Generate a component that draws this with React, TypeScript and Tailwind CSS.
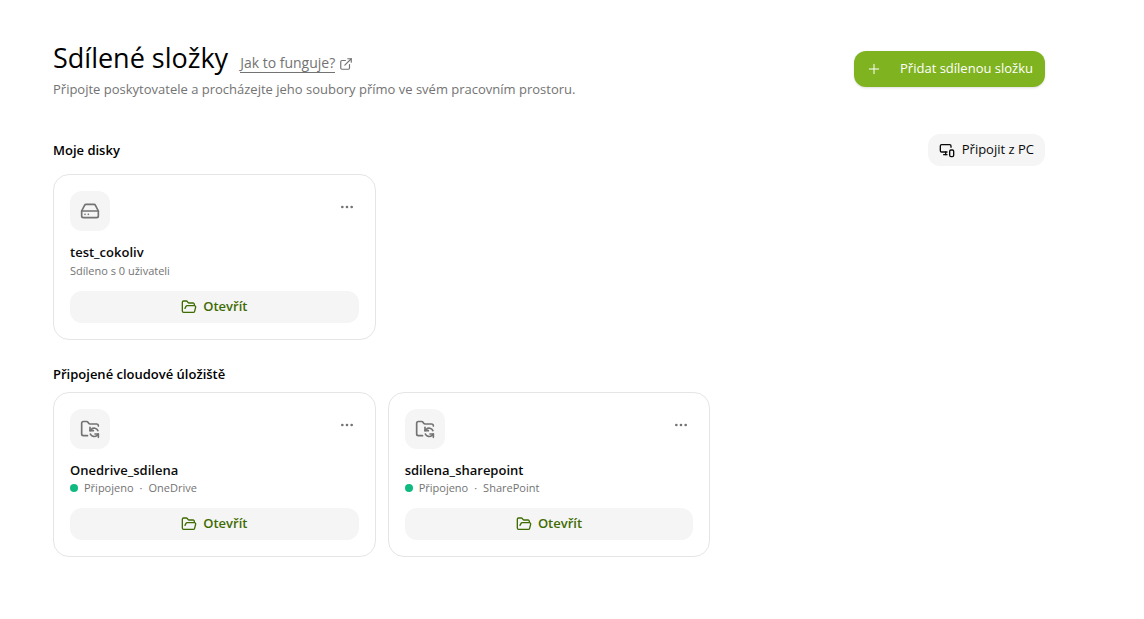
import type { ReactNode } from "react";
import {
  Ellipsis,
  ExternalLink,
  FolderOpen,
  FolderSync,
  HardDrive,
  MonitorSmartphone,
  Plus,
  type LucideIcon,
} from "lucide-react";

const cloudDrives = [
  { name: "Onedrive_sdilena", provider: "OneDrive" },
  { name: "sdilena_sharepoint", provider: "SharePoint" },
];

function DriveCard({ icon: Icon, name, children }: { icon: LucideIcon; name: string; children: ReactNode }) {
  return (
    <article className="rounded-2xl border border-neutral-200 bg-white p-4">
      <div className="flex items-start justify-between">
        <div className="flex size-10 items-center justify-center rounded-xl bg-neutral-100 text-neutral-500">
          <Icon className="size-5" strokeWidth={2} aria-hidden />
        </div>
        <button
          type="button"
          aria-label="Další možnosti"
          className="-mr-1 flex size-8 items-center justify-center rounded-lg text-neutral-500 hover:bg-neutral-100"
        >
          <Ellipsis className="size-4" aria-hidden />
        </button>
      </div>
      <h3 className="mt-[11px] truncate text-[13px] leading-5 font-semibold text-neutral-950">{name}</h3>
      {children}
      <button
        type="button"
        className="mt-3 flex h-8 w-full items-center justify-center gap-1.5 rounded-xl bg-neutral-100 text-[13px] font-semibold text-[#3f6b00] hover:bg-neutral-200"
      >
        <FolderOpen className="size-4" aria-hidden />
        Otevřít
      </button>
    </article>
  );
}

export default function App() {
  return (
    <main className="bg-white pt-10 pr-[99px] pb-8 pl-[53px] font-['Open_Sans','Noto_Sans',sans-serif] text-black">
      <header className="flex items-start justify-between gap-4">
        <div>
          <div className="flex items-baseline gap-3">
            <h1 className="text-[27px] leading-9">Sdílené složky</h1>
            <a href="#napoveda" className="flex items-center gap-1 text-sm leading-5 text-neutral-500">
              <span className="border-b border-neutral-500 leading-[18px]">Jak to funguje?</span>
              <ExternalLink className="size-3.5" aria-hidden />
            </a>
          </div>
          <p className="mt-[3px] text-[13px] leading-5 text-neutral-500">
            Připojte poskytovatele a procházejte jeho soubory přímo ve svém pracovním prostoru.
          </p>
        </div>
        <button
          type="button"
          className="mt-[11px] flex h-9 shrink-0 items-center gap-[18px] rounded-xl bg-[#80b320] px-3 text-[13px] text-white shadow-sm hover:bg-[#73a21c]"
        >
          <Plus className="size-4" strokeWidth={1.5} aria-hidden />
          Přidat sdílenou složku
        </button>
      </header>

      <section className="mt-[35px]">
        <div className="flex items-center justify-between">
          <h2 className="text-[13px] leading-5 font-semibold">Moje disky</h2>
          <button
            type="button"
            className="flex h-8 items-center gap-[7px] rounded-xl bg-neutral-100 px-[11px] text-[13px] text-neutral-950 hover:bg-neutral-200"
          >
            <MonitorSmartphone className="size-4" aria-hidden />
            Připojit z PC
          </button>
        </div>
        <div className="mt-2 grid grid-cols-3 gap-3">
          <DriveCard icon={HardDrive} name="test_cokoliv">
            <p className="text-[11px] leading-[17px] text-neutral-500">Sdíleno s 0 uživateli</p>
          </DriveCard>
        </div>
      </section>

      <section className="mt-6">
        <h2 className="text-[13px] leading-5 font-semibold">Připojené cloudové úložiště</h2>
        <div className="mt-2 grid grid-cols-3 gap-3">
          {cloudDrives.map((drive) => (
            <DriveCard key={drive.name} icon={FolderSync} name={drive.name}>
              <p className="flex items-center gap-1.5 text-[11px] leading-4 text-neutral-500">
                <span className="size-2 rounded-full bg-[#10b981]" />
                <span>Připojeno</span>
                <span>·</span>
                <span>{drive.provider}</span>
              </p>
            </DriveCard>
          ))}
        </div>
      </section>
    </main>
  );
}
